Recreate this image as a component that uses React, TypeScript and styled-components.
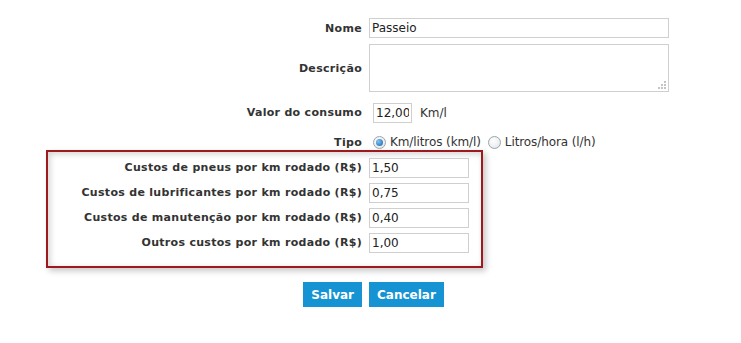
import styled, { createGlobalStyle } from 'styled-components';

const GlobalStyle = createGlobalStyle`
  body {
    margin: 0;
    background: #ffffff;
    font-family: "DejaVu Sans", Verdana, sans-serif;
    color: #333333;
  }
`;

const Form = styled.form`
  padding: 18px 0 0 48px;
  width: 700px;
`;

const Row = styled.div<{ $mt?: number; $h?: number }>`
  display: flex;
  align-items: center;
  gap: 7px;
  margin-top: ${(p) => p.$mt ?? 0}px;
  height: ${(p) => (p.$h ? `${p.$h}px` : 'auto')};
`;

const Label = styled.label`
  width: 314px;
  flex-shrink: 0;
  text-align: right;
  font-size: 11px;
  font-weight: bold;
  letter-spacing: 0.3px;
  color: #333333;
  white-space: nowrap;
`;

const Field = styled.div`
  display: flex;
  align-items: center;
  font-size: 11px;
  color: #333333;
`;

const TextInput = styled.input<{ $w: number; $ml?: number }>`
  box-sizing: border-box;
  width: ${(p) => p.$w}px;
  height: 20px;
  margin: 0 0 0 ${(p) => p.$ml ?? 0}px;
  padding: 0 2px;
  border: 1px solid #cfcfcf;
  font-family: "DejaVu Sans", Verdana, sans-serif;
  font-size: 12px;
  color: #222222;
  background: #ffffff;
  outline: none;
`;

const AreaWrap = styled.div`
  position: relative;
  width: 300px;
  height: 48px;
`;

const Area = styled.textarea`
  box-sizing: border-box;
  display: block;
  width: 300px;
  height: 48px;
  margin: 0;
  border: 1px solid #cfcfcf;
  resize: none;
  outline: none;
`;

const Grip = styled.svg`
  position: absolute;
  right: 3px;
  bottom: 3px;
`;

const Unit = styled.span`
  margin-left: 8px;
  font-size: 12px;
`;

const Radio = styled.span<{ $on?: boolean }>`
  box-sizing: border-box;
  display: inline-flex;
  align-items: center;
  justify-content: center;
  width: 13px;
  height: 13px;
  border-radius: 50%;
  border: 1px solid #9aa4ad;
  background: radial-gradient(circle at 40% 35%, #ffffff, #dfe3e7);
  margin: 0 4px 0 ${(p) => (p.$on ? 4 : 7)}px;

  &::after {
    content: '';
    display: ${(p) => (p.$on ? 'block' : 'none')};
    width: 7px;
    height: 7px;
    border-radius: 50%;
    background: radial-gradient(circle at 35% 35%, #7fc4f2, #1a5fa8);
  }
`;

const RadioText = styled.span`
  font-size: 12px;
  letter-spacing: -0.1px;
`;

const CostBox = styled.fieldset`
  box-sizing: border-box;
  margin: 0 0 0 -2px;
  padding: 6px 0 14px 0;
  width: 437px;
  border: 2px solid #9c1a1d;
  box-shadow: inset 2px 2px 6px rgba(0, 0, 0, 0.18), 3px 3px 6px rgba(0, 0, 0, 0.22);
  display: flex;
  flex-direction: column;
  gap: 6px;
`;

const ButtonCell = styled.div`
  width: 314px;
  display: flex;
  justify-content: flex-end;
`;

const Button = styled.button`
  height: 25px;
  padding: 0 8px;
  border: none;
  background: #1693d2;
  color: #ffffff;
  font-family: "DejaVu Sans", Verdana, sans-serif;
  font-size: 12px;
  font-weight: bold;
  cursor: pointer;
`;

const costs = [
  { label: 'Custos de pneus por km rodado (R$)', value: '1,50' },
  { label: 'Custos de lubrificantes por km rodado (R$)', value: '0,75' },
  { label: 'Custos de manutenção por km rodado (R$)', value: '0,40' },
  { label: 'Outros custos por km rodado (R$)', value: '1,00' },
];

export default function App() {
  return (
    <>
      <GlobalStyle />
      <Form onSubmit={(e) => e.preventDefault()}>
        <Row $h={20}>
          <Label>Nome</Label>
          <TextInput $w={300} defaultValue="Passeio" />
        </Row>
        <Row $mt={6}>
          <Label>Descrição</Label>
          <AreaWrap>
            <Area />
            <Grip width="9" height="9" viewBox="0 0 9 9">
              <rect x="7" y="1" width="2" height="2" fill="#c4c4c4" />
              <rect x="4" y="4" width="2" height="2" fill="#c4c4c4" />
              <rect x="7" y="4" width="2" height="2" fill="#c4c4c4" />
              <rect x="1" y="7" width="2" height="2" fill="#c4c4c4" />
              <rect x="4" y="7" width="2" height="2" fill="#c4c4c4" />
              <rect x="7" y="7" width="2" height="2" fill="#c4c4c4" />
            </Grip>
          </AreaWrap>
        </Row>
        <Row $mt={11} $h={19}>
          <Label>Valor do consumo</Label>
          <Field>
            <TextInput $w={39} $ml={4} defaultValue="12,00" />
            <Unit>Km/l</Unit>
          </Field>
        </Row>
        <Row $mt={12} $h={16}>
          <Label>Tipo</Label>
          <Field>
            <Radio $on />
            <RadioText>Km/litros (km/l)</RadioText>
            <Radio />
            <RadioText>Litros/hora (l/h)</RadioText>
          </Field>
        </Row>
        <CostBox>
          {costs.map((c) => (
            <Row key={c.label} $h={19}>
              <Label>{c.label}</Label>
              <TextInput $w={100} defaultValue={c.value} />
            </Row>
          ))}
        </CostBox>
        <Row $mt={14} $h={25}>
          <ButtonCell>
            <Button type="submit">Salvar</Button>
          </ButtonCell>
          <Button type="button">Cancelar</Button>
        </Row>
      </Form>
    </>
  );
}
